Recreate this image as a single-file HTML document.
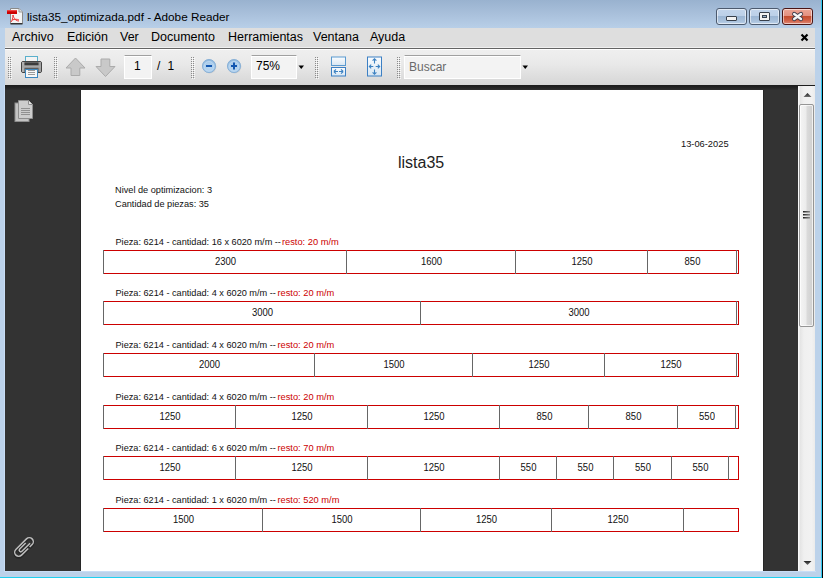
<!DOCTYPE html>
<html><head><meta charset="utf-8">
<style>
*{margin:0;padding:0;box-sizing:border-box}
html,body{width:823px;height:578px;overflow:hidden;background:#bcd2ea;font-family:"Liberation Sans",sans-serif}
.a{position:absolute}
#title{left:0;top:0;width:823px;height:28px;background:linear-gradient(#99b2cf,#a9c0db 50%,#b8cfe8)}
.ttl{left:27px;top:10px;font-size:11.75px;color:#000;white-space:nowrap;line-height:14px}
#menubar{left:5px;top:28px;width:810px;height:19px;background:#dedede}
.menu{top:30px;font-size:12.5px;color:#000;white-space:nowrap;line-height:15px}
#toolbar{left:5px;top:50px;width:810px;height:35px;background:linear-gradient(#efefef,#e9e9e9 40%,#d6d6d6)}
#dark{left:5px;top:85px;width:793px;height:486px;background:#333}
#page{left:81px;top:90px;width:682px;height:481px;background:#fff}
.pt{font-size:9.3px;color:#111;white-space:nowrap;line-height:11px;transform:scaleY(1.05);transform-origin:0 100%}
.box{height:24px;border-top:1px solid #cc0000;border-bottom:1px solid #cc0000;border-right:1px solid #cc0000}
.dv{width:1px;height:24px;background:#666}
.num{font-size:9.5px;color:#111;white-space:nowrap;line-height:11px;text-align:center;transform:scaleY(1.12);transform-origin:50% 100%}
.inp{height:24px;background:#f3f3f3;border:1px solid #fff;border-top:1px solid #a0a0a0;box-shadow:inset 0 1px 0 #fff}
.tb{font-size:12px;color:#000;white-space:nowrap;line-height:15px}
.cap{top:8px;height:17px;border:1px solid #4c5a6e;border-radius:3px;box-shadow:inset 0 0 0 1px rgba(255,255,255,.55)}
</style></head><body>
<div class="a" id="title"></div>
<svg class="a" style="left:6px;top:8px" width="18" height="17" viewBox="0 0 18 17">
 <path d="M4.5 0.5 H13 L16.5 4 V15.5 H4.5 Z" fill="#f4f4f4" stroke="#8a8a8a" stroke-width="1"/>
 <path d="M13 0.5 V4 H16.5" fill="#ddd" stroke="#999" stroke-width="1"/>
 <rect x="4.5" y="15" width="12" height="1.5" fill="#333"/>
 <rect x="1" y="2" width="10" height="4" fill="#c00" />
 <rect x="1" y="2" width="10" height="1.3" fill="#e44"/>
 <path d="M7 7 C8 11 10 13 13 13 M7 7 C7 10 6 13 5 14 M6 12 C9 11 11 11 13 12" fill="none" stroke="#e22" stroke-width="0.9"/>
</svg>
<div class="a ttl">lista35_optimizada.pdf - Adobe Reader</div>
<!-- caption buttons -->
<div class="a cap" style="left:716px;width:31px;background:linear-gradient(#c3d5eb,#bcd0e8 45%,#9bb5d3 46%,#a9c1dc 80%,#bcd2ea)"></div>
<div class="a" style="left:726px;top:16px;width:11px;height:5px;border:1px solid #38404c;border-radius:1px;background:#f2f2f2"></div>
<div class="a cap" style="left:749px;width:31px;background:linear-gradient(#c3d5eb,#bcd0e8 45%,#9bb5d3 46%,#a9c1dc 80%,#bcd2ea)"></div>
<div class="a" style="left:759px;top:12px;width:11px;height:9px;border:1px solid #38404c;border-radius:1px;background:#f2f2f2"></div>
<div class="a" style="left:762px;top:15px;width:5px;height:3px;border:1px solid #38404c;background:#9ab2cc"></div>
<div class="a cap" style="left:782px;width:31px;border-color:#4a1515;background:linear-gradient(#eba595,#e39080 45%,#c24a2c 46%,#cf5f45 75%,#e08a78)"></div>
<svg class="a" style="left:791px;top:11px" width="13" height="11" viewBox="0 0 13 11">
 <path d="M3.2 3 L10 8 M10 3 L3.2 8" stroke="#3b3b4a" stroke-width="4.2" stroke-linecap="round"/>
 <path d="M3.2 3 L10 8 M10 3 L3.2 8" stroke="#f5f5f5" stroke-width="2.5" stroke-linecap="round"/>
</svg>
<!-- frame lines -->
<div class="a" style="left:4px;top:85px;width:1px;height:487px;background:#c8ddf5"></div>
<div class="a" style="left:4px;top:571px;width:812px;height:1px;background:#c8ddf5"></div>
<div class="a" style="left:0;top:577px;width:823px;height:1px;background:#20d0f0"></div>
<div class="a" style="left:821px;top:0;width:1px;height:578px;background:#30c8f0"></div>
<div class="a" style="left:822px;top:0;width:1px;height:578px;background:#000"></div>
<!-- menu -->
<div class="a" id="menubar"></div>
<div class="a" style="left:5px;top:47px;width:810px;height:1px;background:#f0f0f0"></div>
<div class="a" style="left:5px;top:48px;width:810px;height:1px;background:#646464"></div>
<div class="a" style="left:5px;top:49px;width:810px;height:1px;background:#fff"></div>
<div class="a menu" style="left:12px">Archivo</div>
<div class="a menu" style="left:67px">Edición</div>
<div class="a menu" style="left:120px">Ver</div>
<div class="a menu" style="left:151px">Documento</div>
<div class="a menu" style="left:228px">Herramientas</div>
<div class="a menu" style="left:313px">Ventana</div>
<div class="a menu" style="left:370px">Ayuda</div>
<svg class="a" style="left:800px;top:33px" width="9" height="9" viewBox="0 0 9 9"><path d="M1.5 1.5 L7.5 7.5 M7.5 1.5 L1.5 7.5" stroke="#000" stroke-width="2.2"/></svg>
<!-- toolbar -->
<div class="a" id="toolbar"></div>
<svg class="a" style="left:8px;top:57px" width="4" height="22"><rect x="0" y="0" width="1" height="1" fill="#8c8c8c"/><rect x="2" y="0" width="1" height="1" fill="#8c8c8c"/><rect x="1" y="1" width="1" height="1" fill="#fff" opacity=".8"/><rect x="3" y="1" width="1" height="1" fill="#fff" opacity=".8"/><rect x="0" y="2" width="1" height="1" fill="#8c8c8c"/><rect x="2" y="2" width="1" height="1" fill="#8c8c8c"/><rect x="1" y="3" width="1" height="1" fill="#fff" opacity=".8"/><rect x="3" y="3" width="1" height="1" fill="#fff" opacity=".8"/><rect x="0" y="4" width="1" height="1" fill="#8c8c8c"/><rect x="2" y="4" width="1" height="1" fill="#8c8c8c"/><rect x="1" y="5" width="1" height="1" fill="#fff" opacity=".8"/><rect x="3" y="5" width="1" height="1" fill="#fff" opacity=".8"/><rect x="0" y="6" width="1" height="1" fill="#8c8c8c"/><rect x="2" y="6" width="1" height="1" fill="#8c8c8c"/><rect x="1" y="7" width="1" height="1" fill="#fff" opacity=".8"/><rect x="3" y="7" width="1" height="1" fill="#fff" opacity=".8"/><rect x="0" y="8" width="1" height="1" fill="#8c8c8c"/><rect x="2" y="8" width="1" height="1" fill="#8c8c8c"/><rect x="1" y="9" width="1" height="1" fill="#fff" opacity=".8"/><rect x="3" y="9" width="1" height="1" fill="#fff" opacity=".8"/><rect x="0" y="10" width="1" height="1" fill="#8c8c8c"/><rect x="2" y="10" width="1" height="1" fill="#8c8c8c"/><rect x="1" y="11" width="1" height="1" fill="#fff" opacity=".8"/><rect x="3" y="11" width="1" height="1" fill="#fff" opacity=".8"/><rect x="0" y="12" width="1" height="1" fill="#8c8c8c"/><rect x="2" y="12" width="1" height="1" fill="#8c8c8c"/><rect x="1" y="13" width="1" height="1" fill="#fff" opacity=".8"/><rect x="3" y="13" width="1" height="1" fill="#fff" opacity=".8"/><rect x="0" y="14" width="1" height="1" fill="#8c8c8c"/><rect x="2" y="14" width="1" height="1" fill="#8c8c8c"/><rect x="1" y="15" width="1" height="1" fill="#fff" opacity=".8"/><rect x="3" y="15" width="1" height="1" fill="#fff" opacity=".8"/><rect x="0" y="16" width="1" height="1" fill="#8c8c8c"/><rect x="2" y="16" width="1" height="1" fill="#8c8c8c"/><rect x="1" y="17" width="1" height="1" fill="#fff" opacity=".8"/><rect x="3" y="17" width="1" height="1" fill="#fff" opacity=".8"/><rect x="0" y="18" width="1" height="1" fill="#8c8c8c"/><rect x="2" y="18" width="1" height="1" fill="#8c8c8c"/><rect x="1" y="19" width="1" height="1" fill="#fff" opacity=".8"/><rect x="3" y="19" width="1" height="1" fill="#fff" opacity=".8"/><rect x="0" y="20" width="1" height="1" fill="#8c8c8c"/><rect x="2" y="20" width="1" height="1" fill="#8c8c8c"/><rect x="1" y="21" width="1" height="1" fill="#fff" opacity=".8"/><rect x="3" y="21" width="1" height="1" fill="#fff" opacity=".8"/></svg>
<svg class="a" style="left:54px;top:57px" width="4" height="22"><rect x="0" y="0" width="1" height="1" fill="#8c8c8c"/><rect x="2" y="0" width="1" height="1" fill="#8c8c8c"/><rect x="1" y="1" width="1" height="1" fill="#fff" opacity=".8"/><rect x="3" y="1" width="1" height="1" fill="#fff" opacity=".8"/><rect x="0" y="2" width="1" height="1" fill="#8c8c8c"/><rect x="2" y="2" width="1" height="1" fill="#8c8c8c"/><rect x="1" y="3" width="1" height="1" fill="#fff" opacity=".8"/><rect x="3" y="3" width="1" height="1" fill="#fff" opacity=".8"/><rect x="0" y="4" width="1" height="1" fill="#8c8c8c"/><rect x="2" y="4" width="1" height="1" fill="#8c8c8c"/><rect x="1" y="5" width="1" height="1" fill="#fff" opacity=".8"/><rect x="3" y="5" width="1" height="1" fill="#fff" opacity=".8"/><rect x="0" y="6" width="1" height="1" fill="#8c8c8c"/><rect x="2" y="6" width="1" height="1" fill="#8c8c8c"/><rect x="1" y="7" width="1" height="1" fill="#fff" opacity=".8"/><rect x="3" y="7" width="1" height="1" fill="#fff" opacity=".8"/><rect x="0" y="8" width="1" height="1" fill="#8c8c8c"/><rect x="2" y="8" width="1" height="1" fill="#8c8c8c"/><rect x="1" y="9" width="1" height="1" fill="#fff" opacity=".8"/><rect x="3" y="9" width="1" height="1" fill="#fff" opacity=".8"/><rect x="0" y="10" width="1" height="1" fill="#8c8c8c"/><rect x="2" y="10" width="1" height="1" fill="#8c8c8c"/><rect x="1" y="11" width="1" height="1" fill="#fff" opacity=".8"/><rect x="3" y="11" width="1" height="1" fill="#fff" opacity=".8"/><rect x="0" y="12" width="1" height="1" fill="#8c8c8c"/><rect x="2" y="12" width="1" height="1" fill="#8c8c8c"/><rect x="1" y="13" width="1" height="1" fill="#fff" opacity=".8"/><rect x="3" y="13" width="1" height="1" fill="#fff" opacity=".8"/><rect x="0" y="14" width="1" height="1" fill="#8c8c8c"/><rect x="2" y="14" width="1" height="1" fill="#8c8c8c"/><rect x="1" y="15" width="1" height="1" fill="#fff" opacity=".8"/><rect x="3" y="15" width="1" height="1" fill="#fff" opacity=".8"/><rect x="0" y="16" width="1" height="1" fill="#8c8c8c"/><rect x="2" y="16" width="1" height="1" fill="#8c8c8c"/><rect x="1" y="17" width="1" height="1" fill="#fff" opacity=".8"/><rect x="3" y="17" width="1" height="1" fill="#fff" opacity=".8"/><rect x="0" y="18" width="1" height="1" fill="#8c8c8c"/><rect x="2" y="18" width="1" height="1" fill="#8c8c8c"/><rect x="1" y="19" width="1" height="1" fill="#fff" opacity=".8"/><rect x="3" y="19" width="1" height="1" fill="#fff" opacity=".8"/><rect x="0" y="20" width="1" height="1" fill="#8c8c8c"/><rect x="2" y="20" width="1" height="1" fill="#8c8c8c"/><rect x="1" y="21" width="1" height="1" fill="#fff" opacity=".8"/><rect x="3" y="21" width="1" height="1" fill="#fff" opacity=".8"/></svg>
<svg class="a" style="left:191px;top:57px" width="4" height="22"><rect x="0" y="0" width="1" height="1" fill="#8c8c8c"/><rect x="2" y="0" width="1" height="1" fill="#8c8c8c"/><rect x="1" y="1" width="1" height="1" fill="#fff" opacity=".8"/><rect x="3" y="1" width="1" height="1" fill="#fff" opacity=".8"/><rect x="0" y="2" width="1" height="1" fill="#8c8c8c"/><rect x="2" y="2" width="1" height="1" fill="#8c8c8c"/><rect x="1" y="3" width="1" height="1" fill="#fff" opacity=".8"/><rect x="3" y="3" width="1" height="1" fill="#fff" opacity=".8"/><rect x="0" y="4" width="1" height="1" fill="#8c8c8c"/><rect x="2" y="4" width="1" height="1" fill="#8c8c8c"/><rect x="1" y="5" width="1" height="1" fill="#fff" opacity=".8"/><rect x="3" y="5" width="1" height="1" fill="#fff" opacity=".8"/><rect x="0" y="6" width="1" height="1" fill="#8c8c8c"/><rect x="2" y="6" width="1" height="1" fill="#8c8c8c"/><rect x="1" y="7" width="1" height="1" fill="#fff" opacity=".8"/><rect x="3" y="7" width="1" height="1" fill="#fff" opacity=".8"/><rect x="0" y="8" width="1" height="1" fill="#8c8c8c"/><rect x="2" y="8" width="1" height="1" fill="#8c8c8c"/><rect x="1" y="9" width="1" height="1" fill="#fff" opacity=".8"/><rect x="3" y="9" width="1" height="1" fill="#fff" opacity=".8"/><rect x="0" y="10" width="1" height="1" fill="#8c8c8c"/><rect x="2" y="10" width="1" height="1" fill="#8c8c8c"/><rect x="1" y="11" width="1" height="1" fill="#fff" opacity=".8"/><rect x="3" y="11" width="1" height="1" fill="#fff" opacity=".8"/><rect x="0" y="12" width="1" height="1" fill="#8c8c8c"/><rect x="2" y="12" width="1" height="1" fill="#8c8c8c"/><rect x="1" y="13" width="1" height="1" fill="#fff" opacity=".8"/><rect x="3" y="13" width="1" height="1" fill="#fff" opacity=".8"/><rect x="0" y="14" width="1" height="1" fill="#8c8c8c"/><rect x="2" y="14" width="1" height="1" fill="#8c8c8c"/><rect x="1" y="15" width="1" height="1" fill="#fff" opacity=".8"/><rect x="3" y="15" width="1" height="1" fill="#fff" opacity=".8"/><rect x="0" y="16" width="1" height="1" fill="#8c8c8c"/><rect x="2" y="16" width="1" height="1" fill="#8c8c8c"/><rect x="1" y="17" width="1" height="1" fill="#fff" opacity=".8"/><rect x="3" y="17" width="1" height="1" fill="#fff" opacity=".8"/><rect x="0" y="18" width="1" height="1" fill="#8c8c8c"/><rect x="2" y="18" width="1" height="1" fill="#8c8c8c"/><rect x="1" y="19" width="1" height="1" fill="#fff" opacity=".8"/><rect x="3" y="19" width="1" height="1" fill="#fff" opacity=".8"/><rect x="0" y="20" width="1" height="1" fill="#8c8c8c"/><rect x="2" y="20" width="1" height="1" fill="#8c8c8c"/><rect x="1" y="21" width="1" height="1" fill="#fff" opacity=".8"/><rect x="3" y="21" width="1" height="1" fill="#fff" opacity=".8"/></svg>
<svg class="a" style="left:315px;top:57px" width="4" height="22"><rect x="0" y="0" width="1" height="1" fill="#8c8c8c"/><rect x="2" y="0" width="1" height="1" fill="#8c8c8c"/><rect x="1" y="1" width="1" height="1" fill="#fff" opacity=".8"/><rect x="3" y="1" width="1" height="1" fill="#fff" opacity=".8"/><rect x="0" y="2" width="1" height="1" fill="#8c8c8c"/><rect x="2" y="2" width="1" height="1" fill="#8c8c8c"/><rect x="1" y="3" width="1" height="1" fill="#fff" opacity=".8"/><rect x="3" y="3" width="1" height="1" fill="#fff" opacity=".8"/><rect x="0" y="4" width="1" height="1" fill="#8c8c8c"/><rect x="2" y="4" width="1" height="1" fill="#8c8c8c"/><rect x="1" y="5" width="1" height="1" fill="#fff" opacity=".8"/><rect x="3" y="5" width="1" height="1" fill="#fff" opacity=".8"/><rect x="0" y="6" width="1" height="1" fill="#8c8c8c"/><rect x="2" y="6" width="1" height="1" fill="#8c8c8c"/><rect x="1" y="7" width="1" height="1" fill="#fff" opacity=".8"/><rect x="3" y="7" width="1" height="1" fill="#fff" opacity=".8"/><rect x="0" y="8" width="1" height="1" fill="#8c8c8c"/><rect x="2" y="8" width="1" height="1" fill="#8c8c8c"/><rect x="1" y="9" width="1" height="1" fill="#fff" opacity=".8"/><rect x="3" y="9" width="1" height="1" fill="#fff" opacity=".8"/><rect x="0" y="10" width="1" height="1" fill="#8c8c8c"/><rect x="2" y="10" width="1" height="1" fill="#8c8c8c"/><rect x="1" y="11" width="1" height="1" fill="#fff" opacity=".8"/><rect x="3" y="11" width="1" height="1" fill="#fff" opacity=".8"/><rect x="0" y="12" width="1" height="1" fill="#8c8c8c"/><rect x="2" y="12" width="1" height="1" fill="#8c8c8c"/><rect x="1" y="13" width="1" height="1" fill="#fff" opacity=".8"/><rect x="3" y="13" width="1" height="1" fill="#fff" opacity=".8"/><rect x="0" y="14" width="1" height="1" fill="#8c8c8c"/><rect x="2" y="14" width="1" height="1" fill="#8c8c8c"/><rect x="1" y="15" width="1" height="1" fill="#fff" opacity=".8"/><rect x="3" y="15" width="1" height="1" fill="#fff" opacity=".8"/><rect x="0" y="16" width="1" height="1" fill="#8c8c8c"/><rect x="2" y="16" width="1" height="1" fill="#8c8c8c"/><rect x="1" y="17" width="1" height="1" fill="#fff" opacity=".8"/><rect x="3" y="17" width="1" height="1" fill="#fff" opacity=".8"/><rect x="0" y="18" width="1" height="1" fill="#8c8c8c"/><rect x="2" y="18" width="1" height="1" fill="#8c8c8c"/><rect x="1" y="19" width="1" height="1" fill="#fff" opacity=".8"/><rect x="3" y="19" width="1" height="1" fill="#fff" opacity=".8"/><rect x="0" y="20" width="1" height="1" fill="#8c8c8c"/><rect x="2" y="20" width="1" height="1" fill="#8c8c8c"/><rect x="1" y="21" width="1" height="1" fill="#fff" opacity=".8"/><rect x="3" y="21" width="1" height="1" fill="#fff" opacity=".8"/></svg>
<svg class="a" style="left:397px;top:57px" width="4" height="22"><rect x="0" y="0" width="1" height="1" fill="#8c8c8c"/><rect x="2" y="0" width="1" height="1" fill="#8c8c8c"/><rect x="1" y="1" width="1" height="1" fill="#fff" opacity=".8"/><rect x="3" y="1" width="1" height="1" fill="#fff" opacity=".8"/><rect x="0" y="2" width="1" height="1" fill="#8c8c8c"/><rect x="2" y="2" width="1" height="1" fill="#8c8c8c"/><rect x="1" y="3" width="1" height="1" fill="#fff" opacity=".8"/><rect x="3" y="3" width="1" height="1" fill="#fff" opacity=".8"/><rect x="0" y="4" width="1" height="1" fill="#8c8c8c"/><rect x="2" y="4" width="1" height="1" fill="#8c8c8c"/><rect x="1" y="5" width="1" height="1" fill="#fff" opacity=".8"/><rect x="3" y="5" width="1" height="1" fill="#fff" opacity=".8"/><rect x="0" y="6" width="1" height="1" fill="#8c8c8c"/><rect x="2" y="6" width="1" height="1" fill="#8c8c8c"/><rect x="1" y="7" width="1" height="1" fill="#fff" opacity=".8"/><rect x="3" y="7" width="1" height="1" fill="#fff" opacity=".8"/><rect x="0" y="8" width="1" height="1" fill="#8c8c8c"/><rect x="2" y="8" width="1" height="1" fill="#8c8c8c"/><rect x="1" y="9" width="1" height="1" fill="#fff" opacity=".8"/><rect x="3" y="9" width="1" height="1" fill="#fff" opacity=".8"/><rect x="0" y="10" width="1" height="1" fill="#8c8c8c"/><rect x="2" y="10" width="1" height="1" fill="#8c8c8c"/><rect x="1" y="11" width="1" height="1" fill="#fff" opacity=".8"/><rect x="3" y="11" width="1" height="1" fill="#fff" opacity=".8"/><rect x="0" y="12" width="1" height="1" fill="#8c8c8c"/><rect x="2" y="12" width="1" height="1" fill="#8c8c8c"/><rect x="1" y="13" width="1" height="1" fill="#fff" opacity=".8"/><rect x="3" y="13" width="1" height="1" fill="#fff" opacity=".8"/><rect x="0" y="14" width="1" height="1" fill="#8c8c8c"/><rect x="2" y="14" width="1" height="1" fill="#8c8c8c"/><rect x="1" y="15" width="1" height="1" fill="#fff" opacity=".8"/><rect x="3" y="15" width="1" height="1" fill="#fff" opacity=".8"/><rect x="0" y="16" width="1" height="1" fill="#8c8c8c"/><rect x="2" y="16" width="1" height="1" fill="#8c8c8c"/><rect x="1" y="17" width="1" height="1" fill="#fff" opacity=".8"/><rect x="3" y="17" width="1" height="1" fill="#fff" opacity=".8"/><rect x="0" y="18" width="1" height="1" fill="#8c8c8c"/><rect x="2" y="18" width="1" height="1" fill="#8c8c8c"/><rect x="1" y="19" width="1" height="1" fill="#fff" opacity=".8"/><rect x="3" y="19" width="1" height="1" fill="#fff" opacity=".8"/><rect x="0" y="20" width="1" height="1" fill="#8c8c8c"/><rect x="2" y="20" width="1" height="1" fill="#8c8c8c"/><rect x="1" y="21" width="1" height="1" fill="#fff" opacity=".8"/><rect x="3" y="21" width="1" height="1" fill="#fff" opacity=".8"/></svg>
<svg class="a" style="left:19px;top:54px" width="25" height="25" viewBox="0 0 25 25">
 <rect x="6.5" y="2.5" width="12" height="6.5" fill="#f3f3f3" stroke="#5ab0cc" stroke-width="1"/>
 <rect x="2.5" y="7.5" width="20" height="11" rx="1.5" fill="#8c8c8c" stroke="#444" stroke-width="1"/>
 <rect x="3" y="8" width="2.5" height="10" fill="#b0b0b0"/>
 <rect x="19.5" y="8" width="2.5" height="10" fill="#a0a0a0"/>
 <rect x="5.5" y="8.5" width="14" height="3" fill="#3c3c3c"/>
 <rect x="3" y="11.5" width="19" height="2.3" fill="#a8a8a8"/>
 <rect x="5.5" y="13.8" width="14" height="4.5" fill="#5c5c5c"/>
 <rect x="6.5" y="15.5" width="12" height="8" fill="#f7f7f7" stroke="#3d88c0" stroke-width="1"/>
 <path d="M9 16.5 H16 M9 18.5 H16 M9 20.5 H16" stroke="#9a9a9a" stroke-width="1"/>
</svg>
<svg class="a" style="left:64px;top:56px" width="24" height="22" viewBox="0 0 24 22">
 <path d="M11.5 2 L21 12 H15.8 V19.5 H7 V12 H2 Z" fill="#c9c9c9" stroke="#ababab" stroke-width="1"/>
</svg>
<svg class="a" style="left:94px;top:57px" width="24" height="22" viewBox="0 0 24 22">
 <path d="M7 2 H15.8 V9.5 H21 L11.5 19.5 L2 9.5 H7 Z" fill="#c9c9c9" stroke="#ababab" stroke-width="1"/>
</svg>
<div class="a inp" style="left:124px;top:55px;width:28px"></div>
<div class="a tb" style="left:134px;top:59px">1</div>
<div class="a tb" style="left:157px;top:59px">/</div><div class="a tb" style="left:167.5px;top:59px">1</div>
<svg class="a" style="left:200px;top:57px" width="44" height="18" viewBox="0 0 44 18">
 <defs><radialGradient id="zg" cx="0.5" cy="0.6" r="0.55"><stop offset="0" stop-color="#bcd8f0"/><stop offset="0.7" stop-color="#aacbea"/><stop offset="1" stop-color="#8fb8de"/></radialGradient></defs>
 <circle cx="9.6" cy="9.6" r="6.8" fill="#000" opacity=".08"/>
 <circle cx="9" cy="9" r="6.6" fill="url(#zg)" stroke="#86afd6" stroke-width="0.9"/>
 <circle cx="9" cy="9.3" r="4.8" fill="none" stroke="#c6e0f6" stroke-width="0.8" opacity=".8"/>
 <rect x="6" y="8" width="6" height="2" fill="#1256b0"/>
 <circle cx="34.6" cy="9.6" r="6.8" fill="#000" opacity=".08"/>
 <circle cx="34" cy="9" r="6.6" fill="url(#zg)" stroke="#86afd6" stroke-width="0.9"/>
 <circle cx="34" cy="9.3" r="4.8" fill="none" stroke="#c6e0f6" stroke-width="0.8" opacity=".8"/>
 <rect x="31" y="8" width="6" height="2" fill="#1256b0"/>
 <rect x="33" y="5.5" width="2" height="7" fill="#1256b0"/>
</svg>
<div class="a inp" style="left:251px;top:55px;width:46px"></div>
<div class="a tb" style="left:256px;top:59px">75%</div>
<svg class="a" style="left:298px;top:65px" width="7" height="5"><path d="M0.5 0.5 H6 L3.25 4 Z" fill="#000"/></svg>
<svg class="a" style="left:330px;top:56px" width="17" height="21" viewBox="0 0 17 21">
 <defs><linearGradient id="gf" x1="0" y1="0" x2="0" y2="1"><stop offset="0" stop-color="#fbfdff"/><stop offset="1" stop-color="#d8e6f2"/></linearGradient></defs>
 <rect x="1.5" y="1" width="14" height="8.5" fill="url(#gf)" stroke="#5a9ad0"/>
 <rect x="1.5" y="11.5" width="14" height="8.5" fill="url(#gf)" stroke="#3c80c4"/>
 <path d="M3.8 15.5 H8 M3.8 15.5 L6 13.3 M3.8 15.5 L6 17.7 M9 15.5 H13.2 M13.2 15.5 L11 13.3 M13.2 15.5 L11 17.7" stroke="#3d82c2" stroke-width="1.1" fill="none"/>
</svg>
<svg class="a" style="left:366px;top:56px" width="17" height="21" viewBox="0 0 17 21">
 <rect x="1.5" y="1" width="14" height="19" fill="url(#gf)" stroke="#3c80c4"/>
 <path d="M8.5 2.8 V7.5 M6.6 4.7 L8.5 2.8 L10.4 4.7 M8.5 13.5 V18.2 M6.6 16.3 L8.5 18.2 L10.4 16.3 M3.3 10.5 H7.3 M5.2 8.6 L3.3 10.5 L5.2 12.4 M9.7 10.5 H13.7 M11.8 8.6 L13.7 10.5 L11.8 12.4" stroke="#3d82c2" stroke-width="1.1" fill="none"/>
</svg>
<div class="a inp" style="left:404px;top:55px;width:117px"></div>
<div class="a tb" style="left:409px;top:60px;color:#6a6a6a">Buscar</div>
<svg class="a" style="left:522px;top:65px" width="7" height="5"><path d="M0.5 0.5 H6 L3.25 4 Z" fill="#000"/></svg>
<!-- content -->
<div class="a" id="dark"></div>
<div class="a" style="left:5px;top:85px;width:810px;height:5px;background:linear-gradient(#1b1b1b,#212121 40%,#2e2e2e)"></div>
<div class="a" style="left:80px;top:90px;width:1px;height:481px;background:#272727"></div><div class="a" style="left:763px;top:90px;width:1px;height:481px;background:#272727"></div>
<div class="a" id="page"></div>
<svg class="a" style="left:13px;top:98px" width="22" height="26" viewBox="0 0 22 26">
 <rect x="2" y="5" width="14" height="18.5" fill="#c4c4c4" stroke="#8e8e8e" stroke-width="1"/>
 <path d="M5.5 2.5 H15.5 L19.5 6.5 V20.5 H5.5 Z" fill="#cdcdcd" stroke="#8e8e8e" stroke-width="1"/>
 <path d="M15.5 2.5 V6.5 H19.5" fill="#e6e6e6" stroke="#8e8e8e" stroke-width="1"/>
 <path d="M8 10.5 H17 M8 12.5 H17 M8 14.5 H17 M8 16.5 H17" stroke="#8a8a8a" stroke-width="0.9"/>
</svg>
<svg class="a" style="left:8px;top:531px" width="32" height="32" viewBox="-16 -16 32 32">
 <g transform="rotate(45)" fill="none" stroke="#000" stroke-width="2.6" opacity=".25" transform-origin="0 0"><path d="M4 -2 V7.5 A4 4 0 0 1 -4 7.5 V-7.5 A4 4 0 0 1 4 -7.5 V-4 M1.6 -7 V4.5 A1.6 1.6 0 0 1 -1.6 4.5 V-4" transform="translate(0.8,0.8)"/></g>
 <g transform="rotate(45)" fill="none" stroke="#bdbdbd" stroke-width="1.5"><path d="M4 -2 V7.5 A4 4 0 0 1 -4 7.5 V-7.5 A4 4 0 0 1 4 -7.5 V-4 M1.6 -7 V4.5 A1.6 1.6 0 0 1 -1.6 4.5 V-4"/></g>
</svg>
<!-- scrollbar -->
<div class="a" style="left:798px;top:86px;width:17px;height:485px;background:linear-gradient(90deg,#fafafa 0,#fafafa 1px,#e4e4e4 2px,#f0f0f0 35%,#f2f2f2 80%,#ebebeb)"></div>
<svg class="a" style="left:803px;top:92px" width="9" height="6"><defs><linearGradient id="ag" x1="0" y1="0" x2="0" y2="1"><stop offset="0" stop-color="#202020"/><stop offset="1" stop-color="#707070"/></linearGradient></defs><path d="M0.5 5 L4.5 1 L8.5 5 Z" fill="url(#ag)"/></svg>
<div class="a" style="left:799px;top:104px;width:15px;height:223px;border:1px solid #959595;border-radius:2px;background:linear-gradient(90deg,#f4f4f4,#ececec 45%,#dadada 55%,#cfcfcf);box-shadow:inset 0 0 0 1px rgba(255,255,255,.7)"></div>
<svg class="a" style="left:802px;top:210px" width="9" height="10"><defs><linearGradient id="gg"><stop offset="0" stop-color="#202020"/><stop offset="1" stop-color="#8a8a8a"/></linearGradient></defs><path d="M1 1.8 H8 M1 4.8 H8 M1 7.8 H8" stroke="url(#gg)" stroke-width="1.5"/></svg>
<svg class="a" style="left:803px;top:560px" width="9" height="6"><path d="M0.5 1 L8.5 1 L4.5 5 Z" fill="url(#ag)"/></svg>
<!-- page content -->
<div class="a" style="left:398px;top:154px;font-size:16px;color:#222;line-height:18px;white-space:nowrap">lista35</div>
<div class="a pt" style="left:681px;top:139px">13-06-2025</div>
<div class="a pt" style="left:115px;top:185px;font-size:9.2px">Nivel de optimizacion: 3</div>
<div class="a pt" style="left:115px;top:199px;font-size:9.2px">Cantidad de piezas: 35</div>
<div class="a pt" style="left:115.5px;top:236.5px;font-size:9.17px">Pieza: 6214 - cantidad: 16 x 6020 m/m --</div>
<div class="a pt" style="left:281.9px;top:236.5px;color:#cc0000">resto: 20 m/m</div>
<div class="a box" style="left:103px;top:250px;width:636px"></div>
<div class="a dv" style="left:103px;top:250px"></div>
<div class="a dv" style="left:346px;top:250px"></div>
<div class="a num" style="left:104px;top:255.5px;width:243px">2300</div>
<div class="a dv" style="left:515px;top:250px"></div>
<div class="a num" style="left:347px;top:255.5px;width:169px">1600</div>
<div class="a dv" style="left:647px;top:250px"></div>
<div class="a num" style="left:516px;top:255.5px;width:132px">1250</div>
<div class="a dv" style="left:736px;top:250px"></div>
<div class="a num" style="left:648px;top:255.5px;width:89px">850</div>
<div class="a pt" style="left:115.5px;top:287.5px;font-size:9.17px">Pieza: 6214 - cantidad: 4 x 6020 m/m --</div>
<div class="a pt" style="left:277.4px;top:287.5px;color:#cc0000">resto: 20 m/m</div>
<div class="a box" style="left:103px;top:301px;width:636px"></div>
<div class="a dv" style="left:103px;top:301px"></div>
<div class="a dv" style="left:420px;top:301px"></div>
<div class="a num" style="left:104px;top:306.5px;width:317px">3000</div>
<div class="a dv" style="left:736px;top:301px"></div>
<div class="a num" style="left:421px;top:306.5px;width:316px">3000</div>
<div class="a pt" style="left:115.5px;top:339.5px;font-size:9.17px">Pieza: 6214 - cantidad: 4 x 6020 m/m --</div>
<div class="a pt" style="left:277.4px;top:339.5px;color:#cc0000">resto: 20 m/m</div>
<div class="a box" style="left:103px;top:353px;width:636px"></div>
<div class="a dv" style="left:103px;top:353px"></div>
<div class="a dv" style="left:314px;top:353px"></div>
<div class="a num" style="left:104px;top:358.5px;width:211px">2000</div>
<div class="a dv" style="left:472px;top:353px"></div>
<div class="a num" style="left:315px;top:358.5px;width:158px">1500</div>
<div class="a dv" style="left:604px;top:353px"></div>
<div class="a num" style="left:473px;top:358.5px;width:132px">1250</div>
<div class="a dv" style="left:736px;top:353px"></div>
<div class="a num" style="left:605px;top:358.5px;width:132px">1250</div>
<div class="a pt" style="left:115.5px;top:391.5px;font-size:9.17px">Pieza: 6214 - cantidad: 4 x 6020 m/m --</div>
<div class="a pt" style="left:277.4px;top:391.5px;color:#cc0000">resto: 20 m/m</div>
<div class="a box" style="left:103px;top:405px;width:636px"></div>
<div class="a dv" style="left:103px;top:405px"></div>
<div class="a dv" style="left:235px;top:405px"></div>
<div class="a num" style="left:104px;top:410.5px;width:132px">1250</div>
<div class="a dv" style="left:367px;top:405px"></div>
<div class="a num" style="left:236px;top:410.5px;width:132px">1250</div>
<div class="a dv" style="left:499px;top:405px"></div>
<div class="a num" style="left:368px;top:410.5px;width:132px">1250</div>
<div class="a dv" style="left:588px;top:405px"></div>
<div class="a num" style="left:500px;top:410.5px;width:89px">850</div>
<div class="a dv" style="left:677px;top:405px"></div>
<div class="a num" style="left:589px;top:410.5px;width:89px">850</div>
<div class="a dv" style="left:735px;top:405px"></div>
<div class="a num" style="left:678px;top:410.5px;width:58px">550</div>
<div class="a pt" style="left:115.5px;top:442.5px;font-size:9.17px">Pieza: 6214 - cantidad: 6 x 6020 m/m --</div>
<div class="a pt" style="left:277.4px;top:442.5px;color:#cc0000">resto: 70 m/m</div>
<div class="a box" style="left:103px;top:456px;width:636px"></div>
<div class="a dv" style="left:103px;top:456px"></div>
<div class="a dv" style="left:235px;top:456px"></div>
<div class="a num" style="left:104px;top:461.5px;width:132px">1250</div>
<div class="a dv" style="left:367px;top:456px"></div>
<div class="a num" style="left:236px;top:461.5px;width:132px">1250</div>
<div class="a dv" style="left:499px;top:456px"></div>
<div class="a num" style="left:368px;top:461.5px;width:132px">1250</div>
<div class="a dv" style="left:556px;top:456px"></div>
<div class="a num" style="left:500px;top:461.5px;width:57px">550</div>
<div class="a dv" style="left:613px;top:456px"></div>
<div class="a num" style="left:557px;top:461.5px;width:57px">550</div>
<div class="a dv" style="left:671px;top:456px"></div>
<div class="a num" style="left:614px;top:461.5px;width:58px">550</div>
<div class="a dv" style="left:728px;top:456px"></div>
<div class="a num" style="left:672px;top:461.5px;width:57px">550</div>
<div class="a pt" style="left:115.5px;top:494.5px;font-size:9.17px">Pieza: 6214 - cantidad: 1 x 6020 m/m --</div>
<div class="a pt" style="left:277.4px;top:494.5px;color:#cc0000">resto: 520 m/m</div>
<div class="a box" style="left:103px;top:508px;width:636px"></div>
<div class="a dv" style="left:103px;top:508px"></div>
<div class="a dv" style="left:262px;top:508px"></div>
<div class="a num" style="left:104px;top:513.5px;width:159px">1500</div>
<div class="a dv" style="left:420px;top:508px"></div>
<div class="a num" style="left:263px;top:513.5px;width:158px">1500</div>
<div class="a dv" style="left:551px;top:508px"></div>
<div class="a num" style="left:421px;top:513.5px;width:131px">1250</div>
<div class="a dv" style="left:683px;top:508px"></div>
<div class="a num" style="left:552px;top:513.5px;width:132px">1250</div>
</body></html>
